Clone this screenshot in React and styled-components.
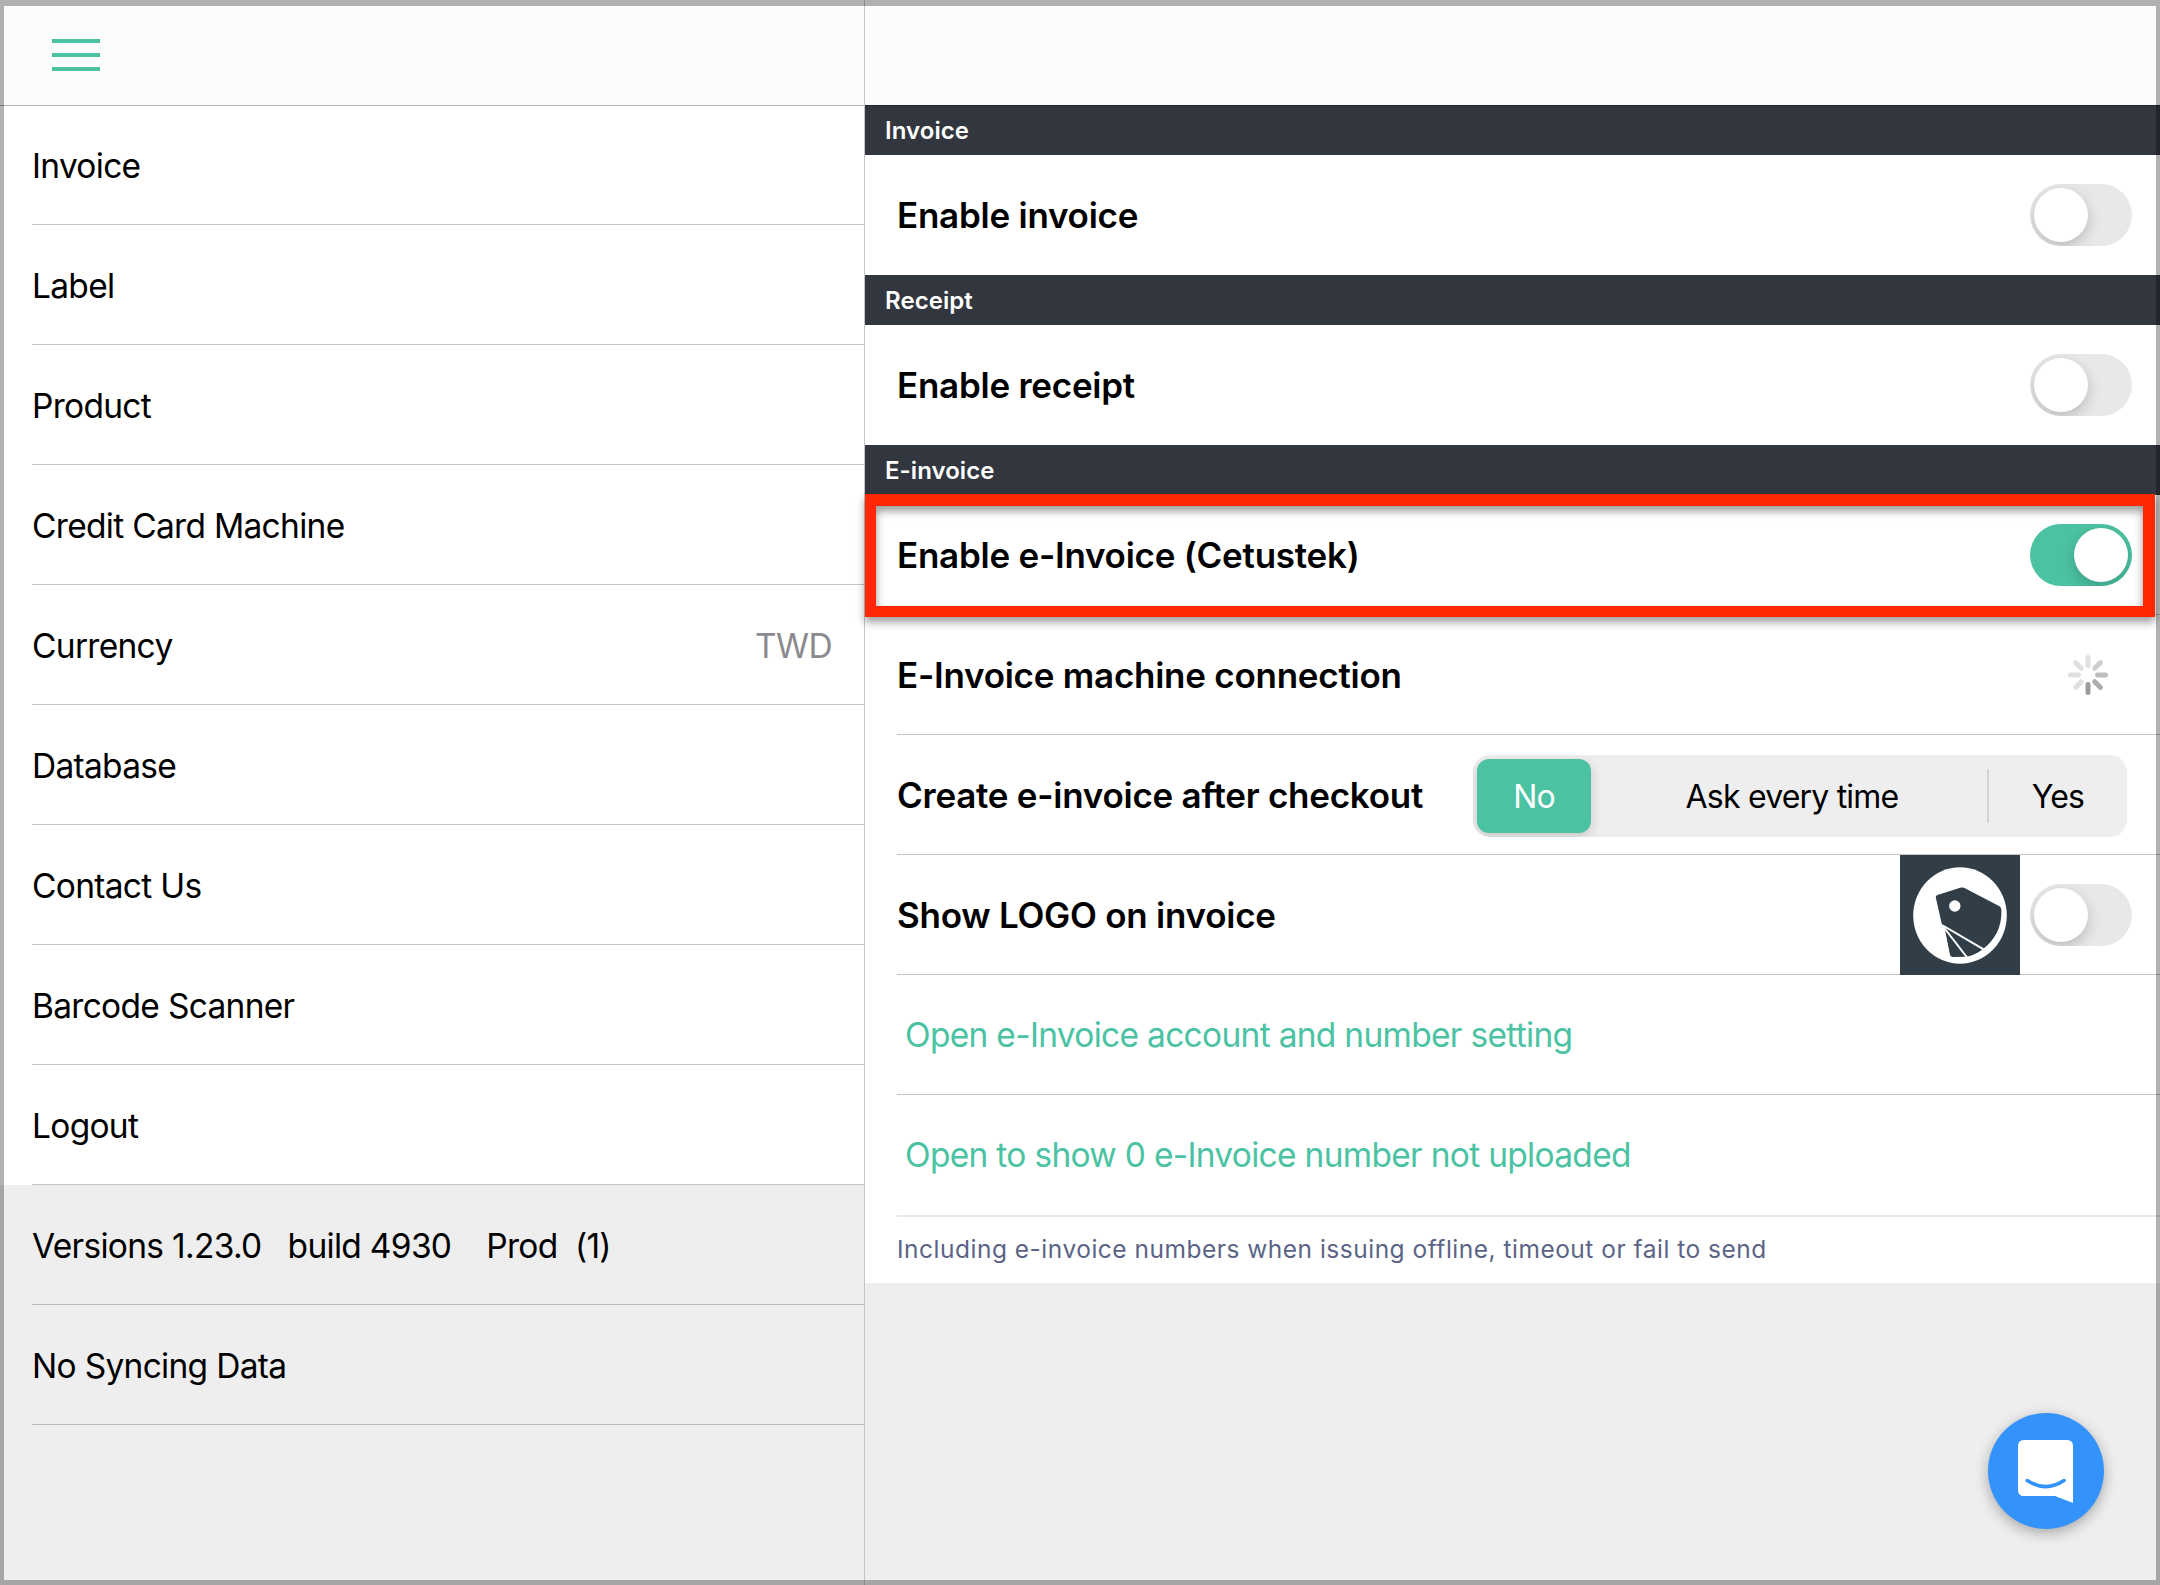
import React from 'react';
import styled, { createGlobalStyle } from "styled-components"

const GlobalStyle = createGlobalStyle`
* {
  box-sizing: border-box;
}
body {
  margin: 0;
  font-family: Inter, "Liberation Sans", sans-serif;
  color: #000;
}
`;

const Container = styled.div`
position: relative;
display: flex;
width: 2160px;
height: 1585px;
overflow: hidden;
background-color: #eeeeee;
`;

// dimmed border that lies over the whole screen
const Frame = styled.div`
position: absolute;
inset: 0;
z-index: 3;
border: solid rgba(0, 0, 0, 0.3);
border-width: 6px 4px 5px;
pointer-events: none;
`;

const Sidebar = styled.div`
width: 865px;
flex: none;
border-right: 1px solid #c4c4c7;
`;

const Content = styled.div`
flex: 1;
`;

const Navbar = styled.div`
position: relative;
height: 105px;
display: flex;
align-items: center;
padding: 5px 52px 0;
background-color: #fcfcfc;
box-shadow: 0 1px 0 rgba(0, 0, 0, 0.3);
`;

const MenuButton = styled.button`
width: 48px;
height: 32px;
padding: 0;
border: none;
background: none;
display: flex;
flex-direction: column;
justify-content: space-between;
`;

const MenuLine = styled.span`
width: 100%;
height: 4px;
background-color: #4bc3a3;
`;

const MenuItem = styled.div`
height: 120px;
padding-left: 32px;
background-color: ${props=>props.$plain ? "transparent" : "white"};
`;

const MenuInner = styled.div`
height: 100%;
padding: 2px 32px 0 0;
display: flex;
align-items: center;
justify-content: space-between;
border-bottom: 1px solid ${props=>props.$plain ? "#b9b9bb" : "#c5c5c7"};
`;

const MenuText = styled.span`
font-size: 33.5px;
letter-spacing: -0.7px;
white-space: pre;
`;

const MenuValue = styled(MenuText)`
letter-spacing: -0.6px;
color: #8a8a8f;
`;

const SectionTitle = styled.div`
height: 50px;
padding: 1px 20px 0;
display: flex;
align-items: center;
background-color: #32363e;
color: white;
font-size: 24px;
font-weight: 600;
letter-spacing: 0.05px;
`;

const Row = styled.div`
position: relative;
height: 120px;
padding-left: 32px;
background-color: white;
`;

const RowInner = styled.div`
height: 100%;
padding-right: ${props=>props.$right || 28}px;
display: flex;
align-items: center;
justify-content: space-between;
border-bottom: ${props=>props.$line ? "1px solid #c5c5c7" : "none"};
`;

const RowText = styled.span`
font-size: 35px;
font-weight: 600;
letter-spacing: -0.25px;
`;

const Controls = styled.div`
display: flex;
align-items: center;
gap: 10px;
`;

const Switch = styled.div`
width: 102px;
height: 62px;
padding: 4px;
display: flex;
justify-content: ${props=>props.$on ? "flex-end" : "flex-start"};
border-radius: 31px;
overflow: hidden;
background-color: ${props=>props.$on ? "#4bc3a3" : "#e8e8ea"};
`;

const Knob = styled.div`
width: 54px;
height: 54px;
border-radius: 50%;
background-color: white;
box-shadow: 0 5px 14px rgba(0, 0, 0, 0.2);
`;

const Highlight = styled.div`
position: absolute;
z-index: 2;
top: -1px;
left: 0;
right: 5px;
height: 123px;
border: solid #ff2800;
border-width: 12px 12px 11px 11px;
filter: drop-shadow(0 5px 4px rgba(0, 0, 0, 0.4));
pointer-events: none;
`;

const Segments = styled.div`
height: 82px;
width: 654px;
margin-top: 3px;
padding: 4px 0 4px 4px;
display: flex;
align-items: center;
border-radius: 17px;
background-color: #eeeeee;
overflow: hidden;
`;

const Segment = styled.div`
height: 74px;
width: ${props=>props.$width}px;
padding-left: ${props=>props.$indent || 0}px;
display: flex;
align-items: center;
justify-content: center;
border-radius: 12px;
font-size: 32px;
letter-spacing: -0.8px;
color: ${props=>props.$active ? "white" : "black"};
background-color: ${props=>props.$active ? "#4bc3a3" : "transparent"};
box-shadow: ${props=>props.$active ? "0 4px 12px rgba(0, 0, 0, 0.16)" : "none"};
`;

const SegmentLine = styled.div`
width: 2px;
height: 54px;
background-color: #d3d3d5;
`;

const LinkText = styled.span`
padding-left: 8px;
font-size: 33.5px;
letter-spacing: -0.7px;
color: #4bc3a3;
`;

const Note = styled.div`
height: 68px;
padding-left: 32px;
background-color: white;
`;

const NoteInner = styled.div`
height: 100%;
padding-bottom: 2px;
display: flex;
align-items: center;
border-top: 2px solid #e5eaee;
font-size: 24.5px;
letter-spacing: 0.5px;
color: #5b6486;
`;

const ChatButton = styled.div`
position: absolute;
left: 1988px;
top: 1413px;
width: 116px;
height: 116px;
border-radius: 50%;
background-color: #3492fb;
box-shadow: 0 4px 14px rgba(0, 0, 0, 0.3);
`;

const menu = [
  { text: "Invoice" },
  { text: "Label" },
  { text: "Product" },
  { text: "Credit Card Machine" },
  { text: "Currency", value: "TWD" },
  { text: "Database" },
  { text: "Contact Us" },
  { text: "Barcode Scanner" },
  { text: "Logout" },
  { text: "Versions 1.23.0   build 4930    Prod  (1)", plain: true },
  { text: "No Syncing Data", plain: true },
];

const spokes = ["#e0e0e0", "#cfcfcf", "#bdbdbd", "#adadad", "#9b9b9b", "#e0e0e0", "#e0e0e0", "#e0e0e0"];

const Toggle = ({ on }) => (
    <Switch $on={on}>
        <Knob/>
    </Switch>
)

const Spinner = () => (
    <svg width="40" height="40" viewBox="-20 -20 40 40">
        {spokes.map((color, i)=>(
        <line key={i} x1="0" y1="-17.5" x2="0" y2="-9.5" stroke={color} strokeWidth="5" strokeLinecap="round" transform={`rotate(${i * 45})`}/>
        ))}
    </svg>
)

const Logo = () => (
    <svg width="120" height="120" viewBox="0 0 120 120">
        <rect width="120" height="120" fill="#313e48"/>
        <ellipse cx="60" cy="60.5" rx="46.8" ry="48.2" fill="white"/>
        <path d="M37.5 40 L61 32.6 Q62.7 32 64.5 33 L99.5 51.3 Q101.3 52.5 101.4 55 C102 72 95 85 83.3 93.7 C78 98 72 101 66.7 101.7 L52.5 102 Q50.3 101.8 49.9 99.5 L45 75 L42 70 L35.8 42.5 Q35.4 40.6 37.5 40 Z" fill="#313e48"/>
        <path d="M42 70 L84.5 94.8 M42 70 L67.5 103" stroke="white" strokeWidth="2" fill="none"/>
        <path d="M41 68 L45.5 79 L49.6 100 L40 90 Z" fill="white"/>
        <circle cx="54.8" cy="51" r="5.7" fill="white"/>
    </svg>
)

const ChatIcon = () => (
    <svg width="116" height="116" viewBox="0 0 116 116">
        <path d="M36 27 H79 Q85 27 85 33 V90 L67 83 H36 Q30 83 30 77 V33 Q30 27 36 27 Z" fill="white"/>
        <path d="M39.3 67.6 Q57.7 79.5 76 67.6" stroke="#3492fb" strokeWidth="3.6" strokeLinecap="round" fill="none"/>
    </svg>
)

const App = () => {
    return(
        <Container>
            <GlobalStyle/>
            <Sidebar>
                <Navbar>
                    <MenuButton aria-label="Menu">
                        <MenuLine/>
                        <MenuLine/>
                        <MenuLine/>
                    </MenuButton>
                </Navbar>
                {menu.map(item=>(
                <MenuItem key={item.text} $plain={item.plain}>
                    <MenuInner $plain={item.plain}>
                        <MenuText>{item.text}</MenuText>
                        {item.value && <MenuValue>{item.value}</MenuValue>}
                    </MenuInner>
                </MenuItem>
                ))}
            </Sidebar>
            <Content>
                <Navbar/>
                <SectionTitle>Invoice</SectionTitle>
                <Row>
                    <RowInner>
                        <RowText>Enable invoice</RowText>
                        <Toggle/>
                    </RowInner>
                </Row>
                <SectionTitle>Receipt</SectionTitle>
                <Row>
                    <RowInner>
                        <RowText>Enable receipt</RowText>
                        <Toggle/>
                    </RowInner>
                </Row>
                <SectionTitle>E-invoice</SectionTitle>
                <Row>
                    <RowInner $line>
                        <RowText>Enable e-Invoice (Cetustek)</RowText>
                        <Toggle on/>
                    </RowInner>
                    <Highlight/>
                </Row>
                <Row>
                    <RowInner $line $right={52}>
                        <RowText>E-Invoice machine connection</RowText>
                        <Spinner/>
                    </RowInner>
                </Row>
                <Row>
                    <RowInner $line $right={33}>
                        <RowText>Create e-invoice after checkout</RowText>
                        <Segments>
                            <Segment $active $width={114}>No</Segment>
                            <Segment $width={396} $indent={6}>Ask every time</Segment>
                            <SegmentLine/>
                            <Segment $width={138}>Yes</Segment>
                        </Segments>
                    </RowInner>
                </Row>
                <Row>
                    <RowInner $line>
                        <RowText>Show LOGO on invoice</RowText>
                        <Controls>
                            <Logo/>
                            <Toggle/>
                        </Controls>
                    </RowInner>
                </Row>
                <Row>
                    <RowInner $line>
                        <LinkText>Open e-Invoice account and number setting</LinkText>
                    </RowInner>
                </Row>
                <Row>
                    <RowInner>
                        <LinkText>Open to show 0 e-Invoice number not uploaded</LinkText>
                    </RowInner>
                </Row>
                <Note>
                    <NoteInner>Including e-invoice numbers when issuing offline, timeout or fail to send</NoteInner>
                </Note>
            </Content>
            <ChatButton>
                <ChatIcon/>
            </ChatButton>
            <Frame/>
        </Container>
    )
}

export default App
